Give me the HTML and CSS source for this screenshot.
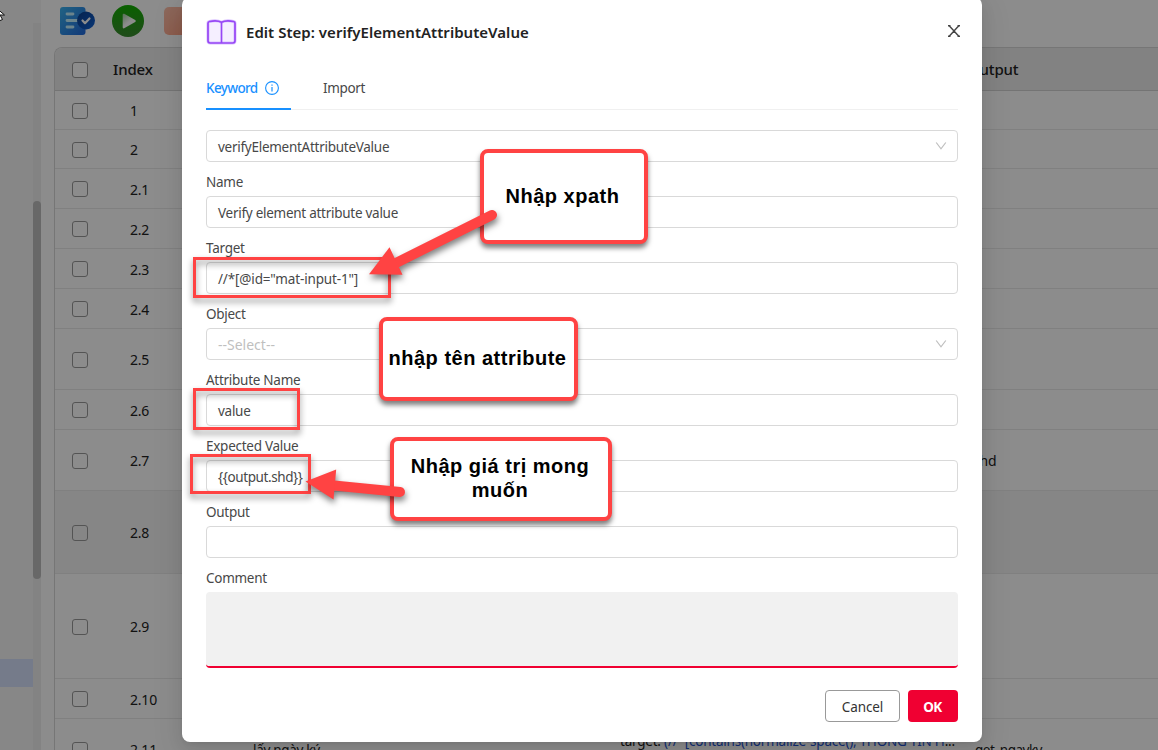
FILE: index.html
```html
<!DOCTYPE html>
<html lang="vi">
<head>
<meta charset="utf-8">
<title>Edit Step</title>
<link rel="stylesheet" href="styles.css">
</head>
<body>
<div class="app">
  <aside class="sidebar">
    <div class="nav"><div class="nav-active"></div></div>
    <div class="track"><div class="thumb"></div></div>
  </aside>
  <main class="main">
    <div class="toolbar">
      <svg width="37" height="32" viewBox="0 0 37 32">
        <defs>
          <linearGradient id="doc" x1="0" y1="0" x2="1" y2="1"><stop offset="0" stop-color="#3cb4f0"/><stop offset="1" stop-color="#2168dc"/></linearGradient>
          <linearGradient id="badge" x1="0" y1="0" x2="1" y2="1"><stop offset="0" stop-color="#0b3f8c"/><stop offset="1" stop-color="#1263d8"/></linearGradient>
        </defs>
        <rect x="1" y="2" width="25.500" height="28" rx="3" fill="url(#doc)"/>
        <path d="M8 9h6M8 15.500h12M8 22h6" stroke="#c4f0ff" stroke-width="2.800" stroke-linecap="round"/>
        <circle cx="27" cy="15.500" r="9" fill="url(#badge)"/>
        <path d="m23.500 15.500 2.500 2.700 4.500-4.700" fill="none" stroke="#fff" stroke-width="2.200" stroke-linecap="round" stroke-linejoin="round"/>
      </svg>
      <svg width="32" height="32" viewBox="0 0 32 32">
        <defs><linearGradient id="go" x1="0" y1="0" x2="0" y2="1"><stop offset="0" stop-color="#12b000"/><stop offset="1" stop-color="#3a8a30"/></linearGradient>
        <linearGradient id="tri" x1="0" y1="0" x2="0.700" y2="1"><stop offset="0" stop-color="#9fce9c"/><stop offset="0.600" stop-color="#fff"/></linearGradient></defs>
        <circle cx="16" cy="16" r="16" fill="url(#go)"/>
        <path d="M12.200 8.800 23.200 15.100q1.400.9 0 1.900L12.200 23.300q-1.500.6-1.500-1V9.800q0-1.600 1.500-1Z" fill="url(#tri)"/>
      </svg>
      <div class="tool-pink"></div>
    </div>
    <div class="table">
      <div class="row head"><i class="check"></i><span class="idx">Index</span><span></span><span></span><span class="out">Output</span></div>
      <div class="row h39"><i class="check"></i><span class="idx">1</span></div>
      <div class="row h39"><i class="check"></i><span class="idx">2</span></div>
      <div class="row h40"><i class="check"></i><span class="idx">2.1</span></div>
      <div class="row h40"><i class="check"></i><span class="idx">2.2</span></div>
      <div class="row h40"><i class="check"></i><span class="idx">2.3</span></div>
      <div class="row h40"><i class="check"></i><span class="idx">2.4</span></div>
      <div class="row h61"><i class="check"></i><span class="idx">2.5</span></div>
      <div class="row h40"><i class="check"></i><span class="idx">2.6</span></div>
      <div class="row h61"><i class="check"></i><span class="idx">2.7</span><span></span><span></span><span class="out shd">_shd</span></div>
      <div class="row h83 hover"><i class="check"></i><span class="idx">2.8</span></div>
      <div class="row h105"><i class="check"></i><span class="idx">2.9</span></div>
      <div class="row h40"><i class="check"></i><span class="idx">2.10</span></div>
      <div class="row h61"><i class="check"></i><span class="idx">2.11</span><span class="step">lấy ngày ký</span><span class="target">target: <b>(//*[contains(normalize-space(),'THÔNG TIN H</b>...</span><span class="out gnk">get_ngayky</span></div>
    </div>
  </main>
</div>
<div class="mask">
  <section class="modal">
    <header class="modal-head">
      <svg width="31" height="27" viewBox="0 0 31 27">
        <path d="M3.500 2.500q7.500-1.600 12 .8 4.500-2.400 12-.8 1.500.3 1.500 1.800v17.500q0 2.200-2.200 2.200H4.200Q2 24 2 21.800V4.300q0-1.500 1.500-1.800Z" fill="#f5efff" stroke="#d9c0ff" stroke-width="3"/>
        <path d="M3.500 2.500q7.500-1.600 12 .8 4.500-2.400 12-.8 1.500.3 1.500 1.800v17.500q0 2.200-2.200 2.200H4.200Q2 24 2 21.800V4.300q0-1.500 1.500-1.800ZM15.500 3.300V24" fill="none" stroke="#9747f5" stroke-width="1.700"/>
      </svg>
      <h1>Edit Step: verifyElementAttributeValue</h1>
      <svg class="close" width="14" height="14" viewBox="0 0 14 14"><path d="m2.200 1.700 9.600 10.600M11.800 1.700 2.200 12.300M1 1.700h2.500M10.500 1.700H13M1 12.300h2.500M10.500 12.300H13" stroke="#444" stroke-width="1.400"/></svg>
    </header>
    <nav class="tabs">
      <div class="tab active"><span>Keyword</span>
        <svg width="14" height="14" viewBox="0 0 14 14"><circle cx="7" cy="7" r="6.400" fill="none" stroke="#1890ff" stroke-width="1.100"/><path d="M7 6v4.500M7 3.500v1.300" stroke="#1890ff" stroke-width="1.200"/></svg>
      </div>
      <div class="tab import"><span>Import</span></div>
    </nav>
    <div class="form">
      <div class="input select"><span>verifyElementAttributeValue</span><svg width="12" height="10" viewBox="0 0 12 10"><path d="m1.200 1.500 4.800 6.300 4.800-6.300" fill="none" stroke="#bfbfbf" stroke-width="1.200"/></svg></div>
      <label>Name</label>
      <div class="input"><span>Verify element attribute value</span></div>
      <label>Target</label>
      <div class="input"><span class="t-target">//*[@id="mat-input-1"]</span></div>
      <label>Object</label>
      <div class="input select"><span class="placeholder">--Select--</span><svg width="12" height="10" viewBox="0 0 12 10"><path d="m1.200 1.500 4.800 6.300 4.800-6.300" fill="none" stroke="#bfbfbf" stroke-width="1.200"/></svg></div>
      <label>Attribute Name</label>
      <div class="input"><span>value</span></div>
      <label>Expected Value</label>
      <div class="input"><span class="t-exp">{{output.shd}}</span></div>
      <label>Output</label>
      <div class="input"></div>
      <label>Comment</label>
      <div class="comment"></div>
    </div>
    <footer class="actions"><button class="cancel">Cancel</button><button class="ok">OK</button></footer>
  </section>
</div>
<div class="notes">
  <div class="box box-target"></div>
  <div class="box box-attr"></div>
  <div class="box box-exp"></div>
  <div class="callout c-xpath"><span>Nhập xpath</span></div>
  <div class="callout c-attr"><span>nhập tên attribute</span></div>
  <div class="callout c-exp"><span>Nhập giá trị mong<br>muốn</span></div>
  <svg class="arrows" width="1158" height="750" viewBox="0 0 1158 750">
    <path d="M492 215 394 264" stroke="#ff4343" stroke-width="10" stroke-linecap="round"/>
    <path d="m369 274.300 20.500-27 13 27.400Z" fill="#ff4343"/>
    <path d="M400 492 334 485.500" stroke="#ff4343" stroke-width="10" stroke-linecap="round"/>
    <path d="m305.500 481.500 30.700-12-2.700 30Z" fill="#ff4343"/>
  </svg>
  <svg class="cursor" width="7" height="15" viewBox="0 0 7 15"><path d="M-6 0 4.500 9H0l2.500 4.500L0 14.500-3 10Z" fill="#fff" stroke="#111"/></svg>
</div>
</body>
</html>
```
FILE: styles.css
```css
* { box-sizing: border-box; }
body {
  margin: 0; width: 1158px; height: 750px; overflow: hidden; position: relative;
  font: 14px/22px "Noto Sans", "Open Sans", sans-serif; color: #222; background: #fff;
}
.app { display: flex; height: 750px; overflow: hidden; }
.sidebar { display: flex; width: 41px; flex: none; background: #f6f6f6; }
.nav { width: 33px; padding-top: 659px; }
.nav-active { height: 28px; background: #d6e1fb; }
.track { width: 8px; margin-top: 23px; padding-top: 178px; background: #eee; }
.thumb { height: 378px; border-radius: 4px; background: #bebebe; }
.main { flex: 1; padding-left: 13px; min-width: 0; }
.toolbar { display: flex; height: 47px; padding: 5px 0 0 5px; gap: 16px; }
.tool-pink { width: 28px; height: 28px; margin: 2px 0 0 4px; border-radius: 5px; background: linear-gradient(135deg, #ffc0aa, #ff9e80); }
.table { border: 1px solid #d8d8d8; border-width: 1px 0 0 1px; border-top-left-radius: 8px; overflow: hidden; }
.row { display: grid; grid-template-columns: 58px 123px 367px 355px 1fr; align-items: center; padding-left: 17px; border-bottom: 1px solid #e9e9e9; white-space: nowrap; }
.head { grid-template-columns: 42px 139px 367px 348px 1fr; height: 43px; padding-top: 1px; background: #ededed; border-color: #d3d3d3; font-size: 15px; font-weight: 500; }
.idx { padding-top: 1px; letter-spacing: -.2px; }
.head .idx, .head .out { padding: 0 0 2px; letter-spacing: -.15px; }
.head .idx { margin-left: -1px; }
.h39 { height: 39px; padding-top: 1px; } .h40 { height: 40px; } .h61 { height: 61px; padding-top: 1px; }
.h83 { height: 83px; padding-top: 1px; } .h105 { height: 105px; padding-top: 1px; }
.h39 .idx, .h61 .idx, .h83 .idx, .h105 .idx { padding-top: 0; }
.h40 .idx { padding-top: 2px; }
.hover { background: #f5f5f5; }
.check { width: 16px; height: 16px; border: 1px solid #999; border-radius: 3px; }
.head .check { background: #fff; }
.step { font-size: 13.5px; letter-spacing: -.3px; padding-top: 1px; }
.gnk { font-size: 13.5px; letter-spacing: -.5px; padding-top: 1px; }
.shd { margin-left: -8px; letter-spacing: -.2px; }
.target b { color: #2557d6; font-weight: 400; }
.target { position: relative; top: -9px; font-size: 13.5px; letter-spacing: -.22px; }

.mask { position: absolute; inset: 0; background: rgba(0,0,0,.45); }
.modal {
  position: absolute; left: 182px; top: -3px; width: 800px; height: 745px; padding: 3px 24px 0;
  background: #fff; border-radius: 8px;
  box-shadow: 0 3px 6px -4px rgba(0,0,0,.12), 0 6px 16px rgba(0,0,0,.08), 0 9px 28px 8px rgba(0,0,0,.05);
}
.modal-head { display: flex; align-items: center; height: 64px; gap: 9px; }
h1 { margin: 0; font-size: 15px; line-height: 24px; font-weight: 600; flex: 1; letter-spacing: .03px; }
.close { margin: -2px -3px 0 0; }
.tabs { display: flex; height: 46px; border-bottom: 1px solid #f0f0f0; }
.tab { height: 46px; display: flex; align-items: center; gap: 7px; padding-top: 2px; font-size: 13.5px; letter-spacing: -.35px; color: #484848; }
.tab span { line-height: 20px; }
.active { width: 85px; color: #1890ff; font-weight: 500; border-bottom: 2px solid #1890ff; padding-top: 4px; letter-spacing: -.65px; }
.active span { margin-top: -1px; }
.import { margin-left: 32px; }
.form { padding-top: 20px; font-size: 13.5px; letter-spacing: -.27px; }
.input { height: 32px; padding: 2px 11px 0; border: 1px solid #d9d9d9; border-radius: 4px; display: flex; align-items: center; color: #484848; }
.select { justify-content: space-between; padding-right: 10px; }
.select svg { margin-top: -2px; }
.placeholder { color: #bfbfbf; font-size: 14px; letter-spacing: 0; }
.t-target { letter-spacing: -.15px; }
.t-exp { letter-spacing: -.4px; }
label { display: flex; align-items: center; height: 34px; padding-top: 5px; color: #484848; }
.comment { height: 76px; background: #f1f1f1; border-radius: 4px; border-bottom: 2px solid #f00032; }
.actions { display: flex; justify-content: flex-end; gap: 8px; padding-top: 22px; }
button { height: 32px; border-radius: 4px; font: inherit; font-size: 13.5px; letter-spacing: -.1px; padding: 2px 0 0; }
.cancel { width: 75px; border: 1px solid #999; background: #fff; color: #333; }
.ok { width: 50px; border: 0; background: #f00032; color: #fff; font-weight: 700; letter-spacing: -.5px; padding-right: 1px; }

.notes { position: absolute; inset: 0; }
.box { position: absolute; border: 3px solid #ff4343; filter: drop-shadow(0 4px 3px rgba(0,0,0,.45)); }
.box-target { left: 193px; top: 257px; width: 198px; height: 41px; }
.box-attr { left: 193px; top: 388px; width: 107px; height: 42px; }
.box-exp { left: 190px; top: 454px; width: 121px; height: 40px; }
.callout {
  position: absolute; display: flex; align-items: center; justify-content: center; text-align: center;
  border: 4px solid #ff4343; border-radius: 8px; background: #fff; color: #000;
  font: 700 20px/24px "Liberation Sans", sans-serif; letter-spacing: .5px; white-space: nowrap;
  padding: 0 2px 2px 0;
  box-shadow: 0 4px 5px rgba(0,0,0,.5);
}
.c-xpath { left: 480px; top: 149px; width: 168px; height: 95px; padding-right: 3px; }
.c-attr { left: 379px; top: 317px; width: 199px; height: 84px; }
.c-exp { left: 390px; top: 437px; width: 222px; height: 84px; }
.arrows { position: absolute; left: 0; top: 0; filter: drop-shadow(1px 4px 3px rgba(0,0,0,.5)); }
.cursor { position: absolute; left: 0; top: 6px; }
```
